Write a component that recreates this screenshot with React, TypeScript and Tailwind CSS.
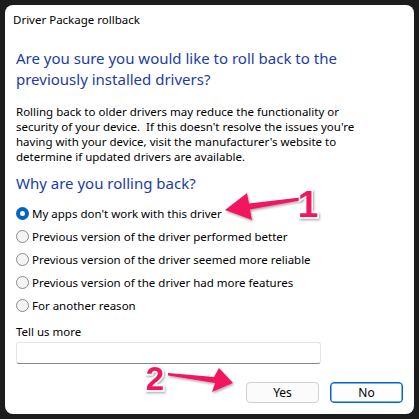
import { useState } from "react";

const REASONS = [
  "My apps don't work with this driver",
  "Previous version of the driver performed better",
  "Previous version of the driver seemed more reliable",
  "Previous version of the driver had more features",
  "For another reason",
];

function Radio({ checked }: { checked: boolean }) {
  return checked ? (
    <span className="flex h-[13px] w-[13px] shrink-0 items-center justify-center rounded-full bg-[#0067c0]">
      <span className="h-[5px] w-[5px] rounded-full bg-white" />
    </span>
  ) : (
    <span className="h-[13px] w-[13px] shrink-0 rounded-full border border-[#8a8a8a] bg-[#f4f4f4]" />
  );
}

// pink callouts drawn over the dialog
function Annotations() {
  return (
    <svg className="pointer-events-none absolute left-0 top-0" width="419" height="419" viewBox="0 0 419 419">
      <defs>
        <filter id="sh" x="-20%" y="-20%" width="140%" height="140%">
          <feDropShadow dx="1" dy="1.5" stdDeviation="1.2" floodColor="#000" floodOpacity="0.35" />
        </filter>
      </defs>
      <g filter="url(#sh)" fill="#f2195e">
        <polygon points="300,197.5 249,203.5 247,193 225,210 252,220 250,209.5 300,200.5" />
        <polygon points="168,373 214,377 219,368 233,383 212,392 215,383 168,375.5" />
        <text
          x="308"
          y="217"
          textAnchor="middle"
          fontSize="37"
          fontWeight="700"
          fontFamily="'Liberation Sans', Arial, sans-serif"
          stroke="#fff"
          strokeWidth="3"
          paintOrder="stroke"
        >
          1
        </text>
        <text
          x="155"
          y="390"
          textAnchor="middle"
          fontSize="33"
          fontWeight="700"
          fontFamily="'Liberation Sans', Arial, sans-serif"
          stroke="#fff"
          strokeWidth="3"
          paintOrder="stroke"
        >
          2
        </text>
      </g>
    </svg>
  );
}

export default function App() {
  const [reason, setReason] = useState(0);

  return (
    <div
      className="relative h-[419px] w-[419px] bg-[#1c1c1c] p-[5px] text-[11.5px] text-black"
      style={{ fontFamily: "'Noto Sans', 'Open Sans', sans-serif" }}
    >
      <div className="flex h-[409px] w-[409px] flex-col rounded-[8px] bg-white">
        <div className="pl-[8px] pt-[7px] leading-[16px]">Driver Package rollback</div>

        <div className="flex flex-col px-[11px]">
          <h1 className="mt-[20px] text-[15px] leading-[21px] text-[#1c3ca8]">
            Are you sure you would like to roll back to the
            <br />
            previously installed drivers?
          </h1>

          <p className="mt-[14px] leading-[15px]">
            Rolling back to older drivers may reduce the functionality or
            <br />
            security of your device.&nbsp; If this doesn't resolve the issues you're
            <br />
            having with your device, visit the manufacturer's website to
            <br />
            determine if updated drivers are available.
          </p>

          <h2 className="mt-[9px] text-[15px] leading-[21px] text-[#1c3ca8]">Why are you rolling back?</h2>

          <div className="mt-[8px] flex flex-col">
            {REASONS.map((r, i) => (
              <label
                key={r}
                className="flex h-[23px] cursor-default items-center gap-[3px]"
                onClick={() => setReason(i)}
              >
                <Radio checked={reason === i} />
                <span className="leading-[16px]">{r}</span>
              </label>
            ))}
          </div>

          <div className="mt-[7px] leading-[16px]">Tell us more</div>
          <div className="mt-[2px] h-[22px] w-[305px] rounded-[3px] border border-[#e5e5e5] border-b-[#868686] bg-white" />

          <div className="mt-[18px] flex justify-end gap-[11px]">
            <button className="flex h-[21px] w-[73px] items-center justify-center rounded-[4px] border border-[#d1d1d1] bg-[#fbfbfb] text-[12px]">
              Yes
            </button>
            <button className="flex h-[21px] w-[73px] items-center justify-center rounded-[4px] border border-[#0067c0] bg-[#fdfdfd] text-[12px] shadow-[inset_0_0_0_0.5px_#0067c0]">
              No
            </button>
          </div>
        </div>
      </div>
      <Annotations />
    </div>
  );
}
